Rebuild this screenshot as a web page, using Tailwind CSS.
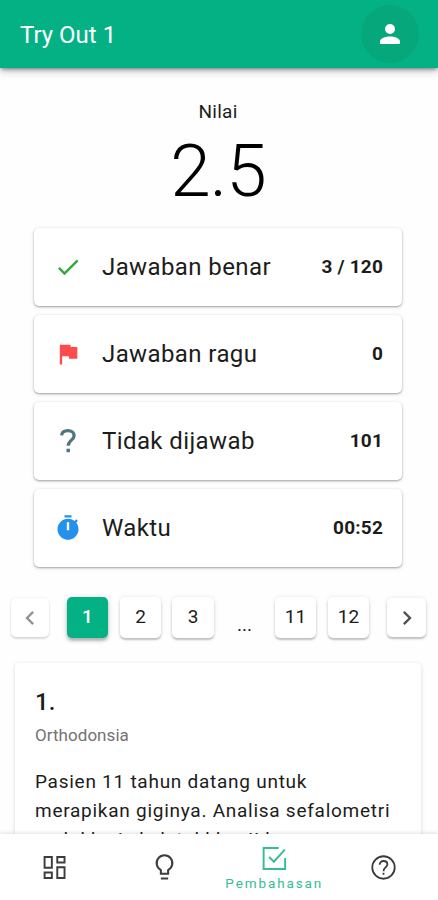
<!DOCTYPE html>
<html lang="id">
<head>
<meta charset="utf-8">
<title>Try Out 1</title>
<script src="https://cdn.jsdelivr.net/npm/@tailwindcss/browser@4"></script>
</head>
<body class="bg-white">
<div class="relative flex h-[900px] w-[438px] flex-col overflow-hidden bg-[#fefefe] font-[Roboto,sans-serif] text-[#1c1c1c]">
  <header class="z-10 flex h-[68px] shrink-0 items-center justify-between bg-[#04b184] pr-[19px] pl-5 text-white shadow-[0_2px_4px_-1px_rgba(0,0,0,0.45),0_4px_8px_rgba(0,0,0,0.18)]">
    <h1 class="pt-px text-[24px] leading-8">Try Out 1</h1>
    <button class="flex size-[58px] items-center justify-center rounded-full bg-[#06a77b]" aria-label="Profil">
      <svg class="size-[30px]" viewBox="0 0 24 24" fill="currentColor"><path d="M12 4a4 4 0 1 1 0 8 4 4 0 0 1 0-8m0 10c4.42 0 8 1.79 8 4v2H4v-2c0-2.21 3.58-4 8-4"/></svg>
    </button>
  </header>

  <main class="flex min-h-0 flex-1 flex-col overflow-hidden">
    <section class="flex shrink-0 flex-col items-center pt-[32px] pr-[2px]">
      <p class="text-[19px] leading-6 tracking-[0.3px]">Nilai</p>
      <p class="mt-[7px] text-[73px] leading-[80px] font-light tracking-[-1px] text-black">2.5</p>
    </section>

    <ul class="mt-[17px] flex shrink-0 flex-col gap-[9px] pr-[36px] pl-[34px]">
      <li class="flex h-[78px] items-center rounded-[5px] bg-white pr-[19px] pl-[20px] shadow-[0_1px_2px_rgba(0,0,0,0.3),0_1px_4px_rgba(0,0,0,0.12)]">
        <svg class="size-7 text-[#35a83b]" viewBox="0 0 24 24" fill="currentColor"><path d="M21 7 9 19l-5.500-5.500 1.410-1.410L9 16.170 19.590 5.590z"/></svg>
        <span class="ml-5 flex-1 text-[24px] tracking-[0.4px]">Jawaban benar</span>
        <span class="text-[19px] font-bold tracking-[0.2px]">3 / 120</span>
      </li>
      <li class="flex h-[78px] items-center rounded-[5px] bg-white pr-[19px] pl-[20px] shadow-[0_1px_2px_rgba(0,0,0,0.3),0_1px_4px_rgba(0,0,0,0.12)]">
        <svg class="size-7 text-[#fc4c4c]" viewBox="0 0 24 24" fill="currentColor"><path d="M14.400 6 14 4H5v17h2v-7h5.600l.400 2h7V6z"/></svg>
        <span class="ml-5 flex-1 text-[24px] tracking-[0.4px]">Jawaban ragu</span>
        <span class="text-[19px] font-bold tracking-[0.2px]">0</span>
      </li>
      <li class="flex h-[78px] items-center rounded-[5px] bg-white pr-[19px] pl-[20px] shadow-[0_1px_2px_rgba(0,0,0,0.3),0_1px_4px_rgba(0,0,0,0.12)]">
        <svg class="size-7 text-[#507780]" viewBox="0 0 24 24" fill="none"><path d="M6.500 7.200C6.800 4.700 9 3.200 12 3.200c3.100 0 5.200 1.700 5.200 4.300 0 3.600-5 4-5 8.500" stroke="currentColor" stroke-width="2.800"/><path fill="currentColor" d="M10.700 18.600h3v3h-3z"/></svg>
        <span class="ml-5 flex-1 text-[24px] tracking-[0.4px]">Tidak dijawab</span>
        <span class="text-[19px] font-bold tracking-[0.2px]">101</span>
      </li>
      <li class="flex h-[78px] items-center rounded-[5px] bg-white pr-[19px] pl-[20px] shadow-[0_1px_2px_rgba(0,0,0,0.3),0_1px_4px_rgba(0,0,0,0.12)]">
        <svg class="size-7 text-[#2491ed]" viewBox="0 0 24 24" fill="currentColor"><path d="M9 1h6v2H9zM19.030 7.390l1.420-1.420c-.430-.510-.900-.990-1.410-1.410l-1.420 1.420A9 9 0 1 0 21 13c0-2.120-.740-4.070-1.970-5.610M13 14h-2V7h2z"/></svg>
        <span class="ml-5 flex-1 text-[24px] tracking-[0.4px]">Waktu</span>
        <span class="text-[19px] font-bold tracking-[0.2px]">00:52</span>
      </li>
    </ul>

    <nav class="mt-[30px] flex h-[41px] shrink-0 items-center pl-[11px] text-[19px]">
      <button class="flex h-[39px] w-[38px] items-center justify-center rounded-[5px] bg-white text-[#929292] shadow-[0_2px_2px_rgba(0,0,0,0.12),0_0_3px_rgba(0,0,0,0.08)]" aria-label="Sebelumnya"><svg class="size-7" viewBox="0 0 24 24" fill="currentColor"><path d="M15.410 16.580 10.830 12l4.580-4.590L14 6l-6 6 6 6z"/></svg></button>
      <button class="ml-[18px] h-[41px] w-[41px] rounded-[5px] bg-[#04b184] font-medium text-white shadow-[0_3px_3px_rgba(0,0,0,0.22),0_1px_6px_rgba(0,0,0,0.16)]">1</button>
      <button class="ml-[12px] h-[41px] w-[41px] rounded-[5px] bg-white shadow-[0_2px_2px_rgba(0,0,0,0.22),0_0_4px_rgba(0,0,0,0.1)]">2</button>
      <button class="ml-[11px] h-[41px] w-[42px] rounded-[5px] bg-white shadow-[0_2px_2px_rgba(0,0,0,0.22),0_0_4px_rgba(0,0,0,0.1)]">3</button>
      <span class="w-[61px] pt-[14px] text-center leading-6">...</span>
      <button class="h-[41px] w-[41px] rounded-[5px] bg-white shadow-[0_2px_2px_rgba(0,0,0,0.22),0_0_4px_rgba(0,0,0,0.1)]">11</button>
      <button class="ml-[12px] h-[41px] w-[41px] rounded-[5px] bg-white shadow-[0_2px_2px_rgba(0,0,0,0.22),0_0_4px_rgba(0,0,0,0.1)]">12</button>
      <button class="ml-[18px] flex h-[39px] w-[39px] items-center justify-center rounded-[5px] bg-white text-[#505050] shadow-[0_2px_2px_rgba(0,0,0,0.22),0_0_4px_rgba(0,0,0,0.1)]" aria-label="Berikutnya"><svg class="size-7" viewBox="0 0 24 24" fill="currentColor"><path d="M8.590 16.580 13.170 12 8.590 7.410 10 6l6 6-6 6z"/></svg></button>
    </nav>

    <article class="mr-[17px] ml-[15px] mt-[25px] h-[300px] shrink-0 rounded-[4px] bg-white pt-[23px] pr-[19px] pl-[20px] shadow-[0_1px_4px_rgba(0,0,0,0.15)]">
      <h2 class="text-[24px] leading-8 font-medium tracking-[0.2px]">1.</h2>
      <p class="mt-[5px] text-[17px] leading-6 tracking-[0.05px] text-[#737373]">Orthodonsia</p>
      <p class="mt-[20px] text-[19px] leading-[29px] tracking-[0.74px] whitespace-nowrap">Pasien 11 tahun datang untuk<br>merapikan giginya. Analisa sefalometri<br>maloklusi skeletal klas II karena</p>
    </article>
  </main>

  <nav class="z-10 grid h-[66px] shrink-0 grid-cols-4 items-center bg-white text-[#3c3c3c] shadow-[0_-1px_4px_rgba(0,0,0,0.12)]">
    <button class="flex justify-center" aria-label="Dasbor"><svg class="size-[29px]" viewBox="0 0 24 24" fill="none" stroke="currentColor" stroke-width="1.600"><path d="M3.800 3.300h6v8.900h-6zm10.500 0h6v4.500h-6zm0 8.500h6v8.900h-6zM3.800 16.200h6v4.500h-6z"/></svg></button>
    <button class="flex justify-center" aria-label="Ide"><svg class="size-[29px]" viewBox="0 0 24 24" fill="none" stroke="currentColor" stroke-width="1.700"><path d="M9 17.200v-3.100A6.500 6.500 0 1 1 15 14.100v3.100zM9 21.100h6"/></svg></button>
    <button class="flex flex-col items-center pl-[1px] text-[#35bd94]"><svg class="mt-[2px] size-[29px]" viewBox="0 0 24 24" fill="none" stroke="currentColor" stroke-width="1.600"><path d="M15.500 3.300H3v17.400h17.800V11.500M7.500 10.700l4 4 9-10"/></svg><span class="text-[13.500px] leading-5 tracking-[1.9px]">Pembahasan</span></button>
    <button class="flex justify-center" aria-label="Bantuan"><svg class="size-[29px]" viewBox="0 0 24 24" fill="none" stroke="currentColor" stroke-width="1.500"><circle cx="12" cy="12" r="9.300"/><path d="M8.800 9.800c0-1.900 1.400-3.200 3.200-3.200s3.200 1.200 3.200 2.900c0 2.400-3.200 2.600-3.200 5.600M12 16.300v1.700"/></svg></button>
  </nav>
</div>
</body>
</html>
